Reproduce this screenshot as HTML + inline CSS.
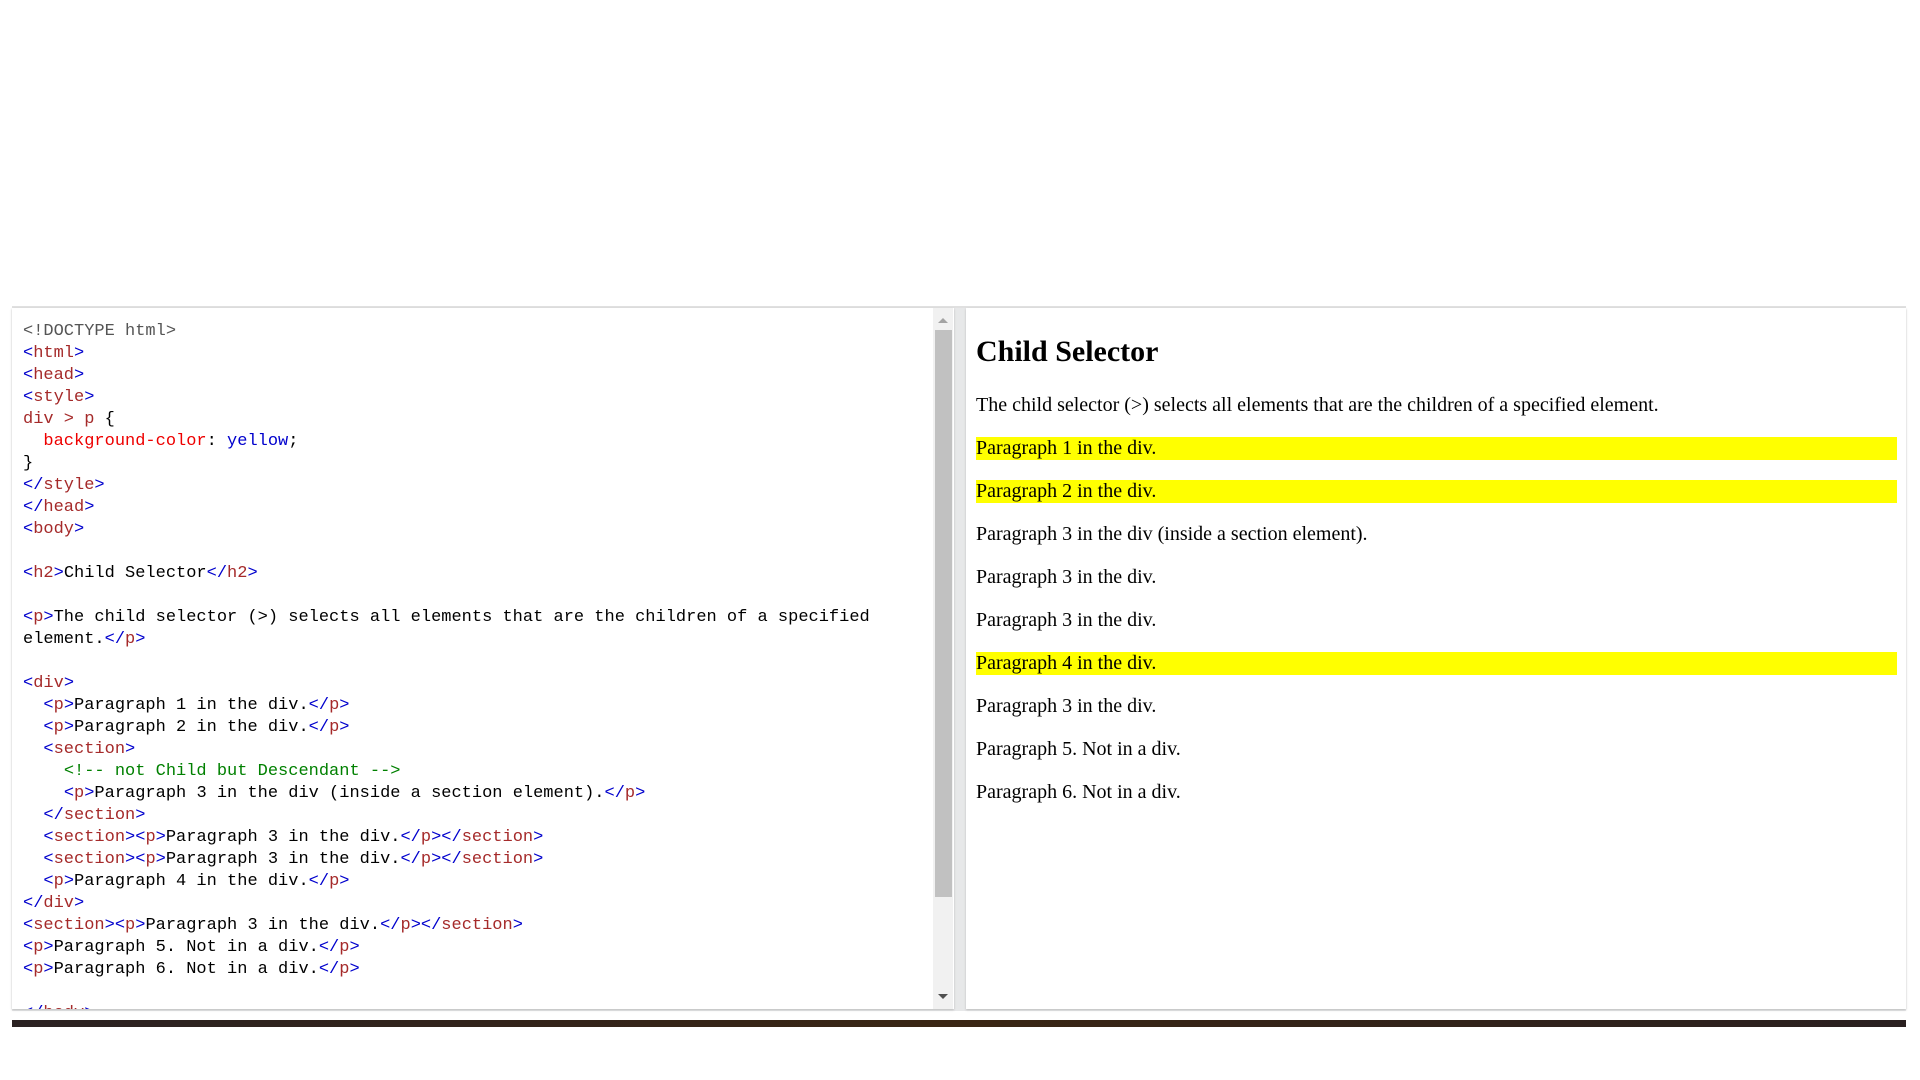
<!DOCTYPE html>
<html><head><style>
html,body{margin:0;padding:0;background:#fff;width:1920px;height:1080px;overflow:hidden;position:relative}
.frame{position:absolute;left:12px;top:306px;width:1894px;height:703px;background:#e7e8e9;border-top:2px solid #e0e0e0}
.left{position:absolute;left:12px;top:308px;width:942px;height:701px;background:#fff;overflow:hidden;box-shadow:0 1px 2px #bbb}
.code{position:absolute;left:11px;top:13px;font-family:"Liberation Mono",monospace;font-size:17px;line-height:22px;white-space:pre;color:#000;letter-spacing:0}
.sb{position:absolute;left:921px;top:0;width:20px;height:701px;background:#f1f1f1}
.thumb{position:absolute;left:2px;top:22px;width:17px;height:567px;background:#c1c1c1}
.up{position:absolute;left:5px;top:10px;width:0;height:0;border-left:5px solid transparent;border-right:5px solid transparent;border-bottom:5px solid #a3a3a3}
.dn{position:absolute;left:5px;top:686px;width:0;height:0;border-left:5px solid transparent;border-right:5px solid transparent;border-top:5px solid #505050}
.right{position:absolute;left:966px;top:308px;width:940px;height:701px;background:#fff;box-shadow:0 1px 2px #bbb;font-family:"Liberation Serif",serif;color:#000}
.right h2{position:absolute;left:10px;top:27px;margin:0;font-size:30px;line-height:34px;font-weight:bold}
.right p{position:absolute;left:10px;right:9px;margin:0;font-size:20px;line-height:23px;height:23px}
.y{background:#ff0}
.bar{position:absolute;left:12px;top:1020px;width:1894px;height:7px;background:linear-gradient(90deg,#2b2222,#3a2614 50%,#2a2020)}
.t{color:#0000cd}.n{color:#a52a2a}.r{color:#e00}.v{color:#0000cd}.c{color:#008000}.d{color:#555}
</style></head><body>
<div class="frame"></div>
<div class="left"><div class="code"><span class="d">&lt;!DOCTYPE html&gt;</span>
<span class="t">&lt;</span><span class="n">html</span><span class="t">&gt;</span>
<span class="t">&lt;</span><span class="n">head</span><span class="t">&gt;</span>
<span class="t">&lt;</span><span class="n">style</span><span class="t">&gt;</span>
<span class="n">div &gt; p </span>{
  <span class="r">background-color</span>: <span class="v">yellow</span>;
}
<span class="t">&lt;/</span><span class="n">style</span><span class="t">&gt;</span>
<span class="t">&lt;/</span><span class="n">head</span><span class="t">&gt;</span>
<span class="t">&lt;</span><span class="n">body</span><span class="t">&gt;</span>

<span class="t">&lt;</span><span class="n">h2</span><span class="t">&gt;</span>Child Selector<span class="t">&lt;/</span><span class="n">h2</span><span class="t">&gt;</span>

<span class="t">&lt;</span><span class="n">p</span><span class="t">&gt;</span>The child selector (&gt;) selects all elements that are the children of a specified
element.<span class="t">&lt;/</span><span class="n">p</span><span class="t">&gt;</span>

<span class="t">&lt;</span><span class="n">div</span><span class="t">&gt;</span>
  <span class="t">&lt;</span><span class="n">p</span><span class="t">&gt;</span>Paragraph 1 in the div.<span class="t">&lt;/</span><span class="n">p</span><span class="t">&gt;</span>
  <span class="t">&lt;</span><span class="n">p</span><span class="t">&gt;</span>Paragraph 2 in the div.<span class="t">&lt;/</span><span class="n">p</span><span class="t">&gt;</span>
  <span class="t">&lt;</span><span class="n">section</span><span class="t">&gt;</span>
    <span class="c">&lt;!-- not Child but Descendant --&gt;</span>
    <span class="t">&lt;</span><span class="n">p</span><span class="t">&gt;</span>Paragraph 3 in the div (inside a section element).<span class="t">&lt;/</span><span class="n">p</span><span class="t">&gt;</span>
  <span class="t">&lt;/</span><span class="n">section</span><span class="t">&gt;</span>
  <span class="t">&lt;</span><span class="n">section</span><span class="t">&gt;&lt;</span><span class="n">p</span><span class="t">&gt;</span>Paragraph 3 in the div.<span class="t">&lt;/</span><span class="n">p</span><span class="t">&gt;&lt;/</span><span class="n">section</span><span class="t">&gt;</span>
  <span class="t">&lt;</span><span class="n">section</span><span class="t">&gt;&lt;</span><span class="n">p</span><span class="t">&gt;</span>Paragraph 3 in the div.<span class="t">&lt;/</span><span class="n">p</span><span class="t">&gt;&lt;/</span><span class="n">section</span><span class="t">&gt;</span>
  <span class="t">&lt;</span><span class="n">p</span><span class="t">&gt;</span>Paragraph 4 in the div.<span class="t">&lt;/</span><span class="n">p</span><span class="t">&gt;</span>
<span class="t">&lt;/</span><span class="n">div</span><span class="t">&gt;</span>
<span class="t">&lt;</span><span class="n">section</span><span class="t">&gt;&lt;</span><span class="n">p</span><span class="t">&gt;</span>Paragraph 3 in the div.<span class="t">&lt;/</span><span class="n">p</span><span class="t">&gt;&lt;/</span><span class="n">section</span><span class="t">&gt;</span>
<span class="t">&lt;</span><span class="n">p</span><span class="t">&gt;</span>Paragraph 5. Not in a div.<span class="t">&lt;/</span><span class="n">p</span><span class="t">&gt;</span>
<span class="t">&lt;</span><span class="n">p</span><span class="t">&gt;</span>Paragraph 6. Not in a div.<span class="t">&lt;/</span><span class="n">p</span><span class="t">&gt;</span>

<span class="t">&lt;/</span><span class="n">body</span><span class="t">&gt;</span></div>
<div class="sb"><div class="up"></div><div class="thumb"></div><div class="dn"></div></div>
</div>
<div class="right">
<h2>Child Selector</h2>
<p style="top:86px">The child selector (&gt;) selects all elements that are the children of a specified element.</p>
<p class="y" style="top:129px">Paragraph 1 in the div.</p>
<p class="y" style="top:172px">Paragraph 2 in the div.</p>
<p style="top:215px">Paragraph 3 in the div (inside a section element).</p>
<p style="top:258px">Paragraph 3 in the div.</p>
<p style="top:301px">Paragraph 3 in the div.</p>
<p class="y" style="top:344px">Paragraph 4 in the div.</p>
<p style="top:387px">Paragraph 3 in the div.</p>
<p style="top:430px">Paragraph 5. Not in a div.</p>
<p style="top:473px">Paragraph 6. Not in a div.</p>
</div>
<div class="bar"></div>
</body></html>
